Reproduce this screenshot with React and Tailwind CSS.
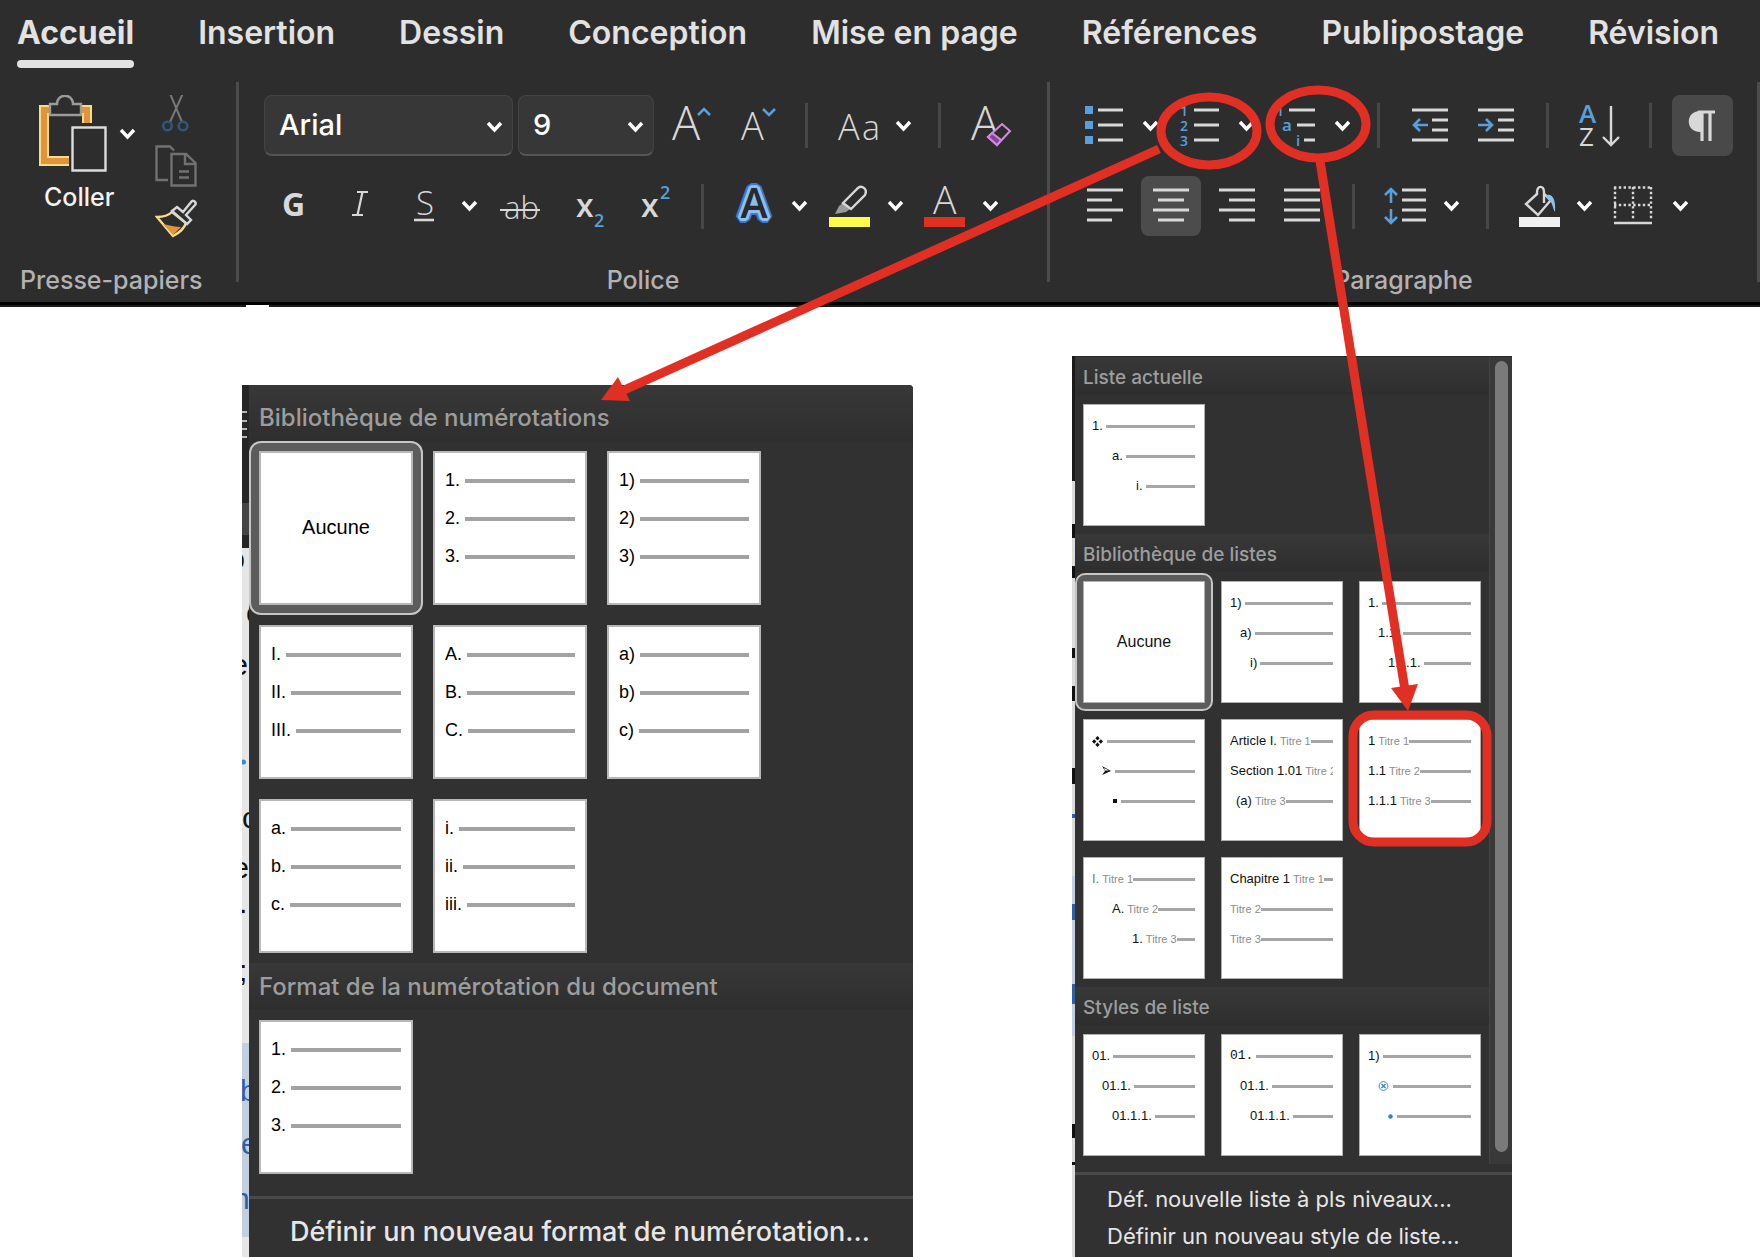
import { useState } from 'react';
import clsx from 'clsx';

const TABS = [
  'Accueil',
  'Insertion',
  'Dessin',
  'Conception',
  'Mise en page',
  'Références',
  'Publipostage',
  'Révision',
];

const NUMBERINGS = [
  { id: 'none', none: true },
  { id: 'decimal-dot', rows: ['1.', '2.', '3.'] },
  { id: 'decimal-paren', rows: ['1)', '2)', '3)'] },
  { id: 'upper-roman', rows: ['I.', 'II.', 'III.'] },
  { id: 'upper-alpha', rows: ['A.', 'B.', 'C.'] },
  { id: 'alpha-paren', rows: ['a)', 'b)', 'c)'] },
  { id: 'alpha-dot', rows: ['a.', 'b.', 'c.'] },
  { id: 'lower-roman', rows: ['i.', 'ii.', 'iii.'] },
];

const CURRENT_LIST = [
  {
    id: 'current',
    rows: [
      { label: '1.', indent: 'ml-0' },
      { label: 'a.', indent: 'ml-5' },
      { label: 'i.', indent: 'ml-11' },
    ],
  },
];

const LISTS = [
  { id: 'none', none: true },
  {
    id: 'mixed',
    rows: [
      { label: '1)', indent: 'ml-0' },
      { label: 'a)', indent: 'ml-[10px]' },
      { label: 'i)', indent: 'ml-5' },
    ],
  },
  {
    id: 'legal',
    rows: [
      { label: '1.', indent: 'ml-0' },
      { label: '1.1.', indent: 'ml-[10px]' },
      { label: '1.1.1.', indent: 'ml-5' },
    ],
  },
  {
    id: 'bullets',
    rows: [
      { mark: 'diamond', indent: 'ml-0' },
      { mark: 'arrow', indent: 'ml-[10px]' },
      { mark: 'square', indent: 'ml-5' },
    ],
  },
  {
    id: 'article',
    rows: [
      { label: 'Article I.', title: 'Titre 1', indent: 'ml-0' },
      { label: 'Section 1.01', title: 'Titre 2', indent: 'ml-0' },
      { label: '(a)', title: 'Titre 3', indent: 'ml-[6px]' },
    ],
  },
  {
    id: 'headings',
    rows: [
      { label: '1', title: 'Titre 1', indent: 'ml-0' },
      { label: '1.1', title: 'Titre 2', indent: 'ml-0' },
      { label: '1.1.1', title: 'Titre 3', indent: 'ml-0' },
    ],
  },
  {
    id: 'outline',
    rows: [
      { label: 'I.', title: 'Titre 1', indent: 'ml-0', faded: true },
      { label: 'A.', title: 'Titre 2', indent: 'ml-5' },
      { label: '1.', title: 'Titre 3', indent: 'ml-10' },
    ],
  },
  {
    id: 'chapter',
    rows: [
      { label: 'Chapitre 1', title: 'Titre 1', indent: 'ml-0' },
      { title: 'Titre 2', indent: 'ml-0' },
      { title: 'Titre 3', indent: 'ml-0' },
    ],
  },
];

const LIST_STYLES = [
  {
    id: 'style-1',
    rows: [
      { label: '01.', indent: 'ml-0' },
      { label: '01.1.', indent: 'ml-[10px]' },
      { label: '01.1.1.', indent: 'ml-5' },
    ],
  },
  {
    id: 'style-2',
    rows: [
      { label: '01.', indent: 'ml-0', mono: true },
      { label: '01.1.', indent: 'ml-[10px]' },
      { label: '01.1.1.', indent: 'ml-5' },
    ],
  },
  {
    id: 'style-3',
    rows: [
      { label: '1)', indent: 'ml-0' },
      { mark: 'target', indent: 'ml-[10px]' },
      { mark: 'dot', indent: 'ml-5' },
    ],
  },
];

/* ---------- Ribbon ---------- */

const Tool = ({ label, w, h = 60, className, children }) => (
  <button type="button" aria-label={label} title={label} className={clsx('shrink-0', className)}>
    <svg
      width={w}
      height={h}
      viewBox={`0 0 ${w} ${h}`}
      fill="none"
      stroke="#d8d8d8"
      strokeWidth="2"
      className="overflow-visible"
    >
      {children}
    </svg>
  </button>
);

const ChevronIcon = ({ className }) => (
  <svg width="17" height="12" viewBox="0 0 17 12" fill="none" className={className}>
    <path d="M2 2 L8.5 9 L15 2" stroke="#fff" strokeWidth="3.4" />
  </svg>
);

const Chevron = ({ label, className }) => (
  <button type="button" aria-label={label} className={clsx('shrink-0', className)}>
    <ChevronIcon />
  </button>
);

const Separator = ({ className }) => <div className={clsx('h-[45px] w-[3px] shrink-0 bg-[#474747]', className)} />;

const GroupDivider = () => <div className="h-[200px] w-[3px] shrink-0 bg-[#4c4c4c]" />;

const GroupLabel = ({ children }) => (
  <div className="mt-[29px] text-center text-[25px] font-medium leading-[30px] text-[#b2b2b2]">{children}</div>
);

const Select = ({ label, value, options, className }) => (
  <div className={clsx('relative shrink-0', className)}>
    <select
      aria-label={label}
      defaultValue={value}
      className="h-[61px] w-full appearance-none rounded-lg border border-b-2 border-[#434343] border-b-[#565656] bg-[#373737] pl-[14px] text-[29px] font-medium text-white"
    >
      {options.map((o) => (
        <option key={o}>{o}</option>
      ))}
    </select>
    <ChevronIcon className="pointer-events-none absolute right-[10px] top-[26px]" />
  </div>
);

const Lines = ({ rows }) =>
  rows.map(([x1, x2, y]) => <path key={`${x1}-${y}`} d={`M${x1} ${y} H${x2}`} strokeWidth="3" />);

const ClipboardGroup = () => (
  <section className="w-[236px] shrink-0 pt-[13px]">
    <div className="flex h-[141px]">
      <div className="ml-[38px] flex w-[100px] flex-col">
        <div className="flex">
          <button type="button" aria-label="Coller" className="shrink-0">
            <svg width="70" height="77" viewBox="0 0 70 77" fill="none">
              <path d="M34 66 H6 V15 H49 V28" stroke="#f8dc8c" strokeWidth="10" />
              <path d="M34 66 H6 V15 H49 V28" stroke="#e0953a" strokeWidth="6" />
              <path d="M12 8 H43 V20 H12 Z" fill="#2d2d2d" />
              <path d="M12 20 V9 H19 C19 -2 35 -2 35 9 H43 V20 Z" fill="#2d2d2d" stroke="#9b9b9b" strokeWidth="2.4" />
              <path d="M31 29 H70 V77 H31 Z" fill="#2d2d2d" />
              <path d="M34.500 32.500 H67.500 V75.500 H34.500 Z" stroke="#dcdcdc" strokeWidth="2.400" />
            </svg>
          </button>
          <Chevron label="Options de collage" className="ml-[11px]" />
        </div>
        <span className="ml-[6px] mt-[9px] text-[25px] font-medium leading-[32px] text-[#f2f2f2]">Coller</span>
      </div>
      <div className="ml-[17px] flex flex-col">
        <button type="button" aria-label="Couper" className="h-[44px]">
          <svg width="42" height="44" viewBox="0 0 42 44" fill="none">
            <path d="M14 -4 L27 27 M29 -4 L15 27" stroke="#787878" strokeWidth="2" />
            <circle cx="12.500" cy="31" r="4.300" stroke="#2f5577" strokeWidth="2.600" />
            <circle cx="28" cy="31" r="4.300" stroke="#2f5577" strokeWidth="2.600" />
          </svg>
        </button>
        <button type="button" aria-label="Copier" className="mt-[6px]">
          <svg width="42" height="42" viewBox="0 0 42 42" fill="none" stroke="#717171" strokeWidth="2.400">
            <path d="M13 35 H1.500 V1.500 H15 L19 5.500" />
            <path d="M16.500 9 H31 L40.500 18 V40.500 H16.500 Z M30 9 V19 H40" />
            <path d="M24 26.500 H34 M24 32.500 H34" />
          </svg>
        </button>
        <button type="button" aria-label="Reproduire la mise en forme" className="mt-[12px]">
          <svg width="42" height="40" viewBox="0 0 42 40" fill="none">
            <path d="M17 13 C13 17 8 18 2 18 L18 37 C24 34 29 30 31 24 Z" stroke="#f8dc8c" strokeWidth="2.400" />
            <path d="M8 25 C14 26 20 28 26 28 L18 36 Z" fill="#e0953a" />
            <path
              d="M17 12 L22 8 L28 13 L37 2 C39 1 42 4 40 6 L31 16 L36 21 L32 25 Z"
              fill="#2d2d2d"
              stroke="#d8d8d8"
              strokeWidth="2.400"
            />
          </svg>
        </button>
      </div>
    </div>
    <div className="ml-5 mt-[29px] text-[25px] font-medium leading-[30px] text-[#b2b2b2]">Presse-papiers</div>
  </section>
);

const FontGroup = () => (
  <section className="w-[808px] shrink-0 pt-[13px]">
    <div className="flex h-[61px] items-center">
      <Select label="Police" value="Arial" options={['Arial', 'Calibri', 'Times']} className="ml-[25px] w-[249px]" />
      <Select label="Taille de police" value="9" options={['8', '9', '10', '11', '12']} className="ml-[5px] w-[136px]" />
      <Tool label="Augmenter la taille" w={40} className="ml-[18px]">
        <text x="0" y="44" fontSize="47" className="fill-[#d8d8d8] stroke-none font-['Open_Sans'] font-light">A</text>
        <path d="M26 19 L32 13 L38 19" stroke="#5a9fdc" strokeWidth="2.600" />
      </Tool>
      <Tool label="Réduire la taille" w={36} className="ml-[29px]">
        <text x="0" y="44" fontSize="38" className="fill-[#d8d8d8] stroke-none font-['Open_Sans'] font-light">A</text>
        <path d="M22 13 L28 19 L34 13" stroke="#5a9fdc" strokeWidth="2.600" />
      </Tool>
      <Separator className="ml-[28px]" />
      <Tool label="Modifier la casse" w={42} className="ml-[30px]">
        <text x="0" y="44" fontSize="36" className="fill-[#d8d8d8] stroke-none font-['Open_Sans'] font-light">A</text>
        <text x="24" y="44" fontSize="34" className="fill-[#d8d8d8] stroke-none font-['Open_Sans'] font-light">a</text>
      </Tool>
      <Chevron label="Options de casse" className="ml-[15px]" />
      <Separator className="ml-[26px]" />
      <Tool label="Effacer la mise en forme" w={40} className="ml-[30px]">
        <text x="0" y="44" fontSize="47" className="fill-[#d8d8d8] stroke-none font-['Open_Sans'] font-light">A</text>
        <path d="M31 28 L39 35 L26 49 L17 41 Z" fill="#2d2d2d" stroke="#d08be0" />
        <path d="M21 37 L30 44 L26 49 L17 41 Z" fill="#8a3fa0" stroke="#d08be0" />
      </Tool>
    </div>
    <div className="mt-5 flex h-[60px] items-center">
      <Tool label="Gras" w={24} className="ml-[43px]">
        <text x="0" y="40" fontSize="32" className="fill-[#d8d8d8] stroke-none font-['Open_Sans'] font-bold">G</text>
      </Tool>
      <Tool label="Italique" w={20} className="ml-[44px]">
        <path d="M7 16 H18 M2 39 H13 M12.500 16 L7.500 39" strokeWidth="2.200" />
      </Tool>
      <Tool label="Souligné" w={20} className="ml-[44px]">
        <text x="2" y="39" fontSize="33" className="fill-[#d8d8d8] stroke-none font-['Open_Sans'] font-light">S</text>
        <path d="M0 44 H20" strokeWidth="2.600" />
      </Tool>
      <Chevron label="Styles de soulignement" className="ml-[27px]" />
      <Tool label="Barré" w={40} className="ml-[22px]">
        <text x="4" y="43" fontSize="31" className="fill-[#d8d8d8] stroke-none font-['Open_Sans'] font-light">ab</text>
        <path d="M0 34 H40" />
      </Tool>
      <Tool label="Indice" w={30} className="ml-[36px]">
        <text x="0" y="41" fontSize="32" className="fill-[#d8d8d8] stroke-none font-['Open_Sans'] font-semibold">x</text>
        <text x="18" y="51" fontSize="18" className="fill-[#5a9fdc] stroke-none font-['Open_Sans'] font-semibold">2</text>
      </Tool>
      <Tool label="Exposant" w={30} className="ml-[35px]">
        <text x="0" y="41" fontSize="32" className="fill-[#d8d8d8] stroke-none font-['Open_Sans'] font-semibold">x</text>
        <text x="19" y="23" fontSize="18" className="fill-[#5a9fdc] stroke-none font-['Open_Sans'] font-semibold">2</text>
      </Tool>
      <Separator className="ml-[30px]" />
      <Tool label="Effets de texte" w={40} className="ml-[30px]">
        <g className="font-['Open_Sans'] font-semibold" fontSize="41" textAnchor="middle" strokeLinejoin="bevel">
          <text x="20" y="42" stroke="#3c78cf" strokeWidth="10">A</text>
          <text x="20" y="42" stroke="#8fbfec" strokeWidth="6">A</text>
          <text x="20" y="42" stroke="none" fill="#262b33">A</text>
        </g>
      </Tool>
      <Chevron label="Options d’effets" className="ml-[17px]" />
      <Tool label="Surlignage" w={41} className="ml-[21px]">
        <path d="M0 41 H41 V51 H0 Z" fill="#fffb4b" stroke="none" />
        <path d="M6 38 L10 30 L14 27 L21 33 L17 36 Z" fill="#9a9a9a" stroke="none" />
        <path d="M14 27 L29 12 C33 9 39 13 36 19 L22 33 Z" strokeWidth="2.400" />
      </Tool>
      <Chevron label="Couleur de surlignage" className="ml-[17px]" />
      <Tool label="Couleur de police" w={41} className="ml-[20px]">
        <text x="9" y="38" fontSize="39" className="fill-[#d8d8d8] stroke-none font-['Open_Sans'] font-light">A</text>
        <path d="M0 41 H41 V51 H0 Z" fill="#e03020" stroke="none" />
      </Tool>
      <Chevron label="Choix de couleur" className="ml-[17px]" />
    </div>
    <GroupLabel>Police</GroupLabel>
  </section>
);

const ParagraphGroup = () => (
  <section className="min-w-0 flex-1 pt-[13px]">
    <div className="flex h-[61px] items-center">
      <Tool label="Puces" w={38} className="ml-[35px]">
        <path d="M0 10 H8 V18 H0 Z M0 25 H8 V33 H0 Z M0 40 H8 V48 H0 Z" fill="#5a9fdc" stroke="none" />
        <Lines rows={[[13, 38, 14], [13, 38, 29], [13, 38, 44]]} />
      </Tool>
      <Chevron label="Bibliothèque de puces" className="ml-[19px]" />
      <Tool label="Numérotation" w={39} className="ml-[21px]">
        <g className="fill-[#5a9fdc] stroke-none font-['Open_Sans'] font-semibold" fontSize="14">
          <text x="0" y="20">1</text>
          <text x="0" y="35">2</text>
          <text x="0" y="50">3</text>
        </g>
        <Lines rows={[[14, 39, 14], [14, 39, 29], [14, 39, 44]]} />
      </Tool>
      <Chevron label="Bibliothèque de numérotations" className="ml-[19px]" />
      <Tool label="Liste à plusieurs niveaux" w={36} className="ml-[24px]">
        <g className="fill-[#5a9fdc] stroke-none font-['Open_Sans'] font-semibold">
          <text x="-3" y="20" fontSize="14">1</text>
          <text x="3" y="35" fontSize="17">a</text>
          <text x="17" y="50" fontSize="15">i</text>
        </g>
        <Lines rows={[[10, 36, 14], [18, 36, 29], [25, 36, 44]]} />
      </Tool>
      <Chevron label="Bibliothèque de listes" className="ml-[19px]" />
      <Separator className="ml-[26px]" />
      <Tool label="Réduire le retrait" w={36} className="ml-[32px]">
        <Lines rows={[[0, 36, 14], [20, 36, 24], [20, 36, 34], [0, 36, 44]]} />
        <path d="M16 29 H2 M8 23 L2 29 L8 35" stroke="#5a9fdc" strokeWidth="2.600" />
      </Tool>
      <Tool label="Augmenter le retrait" w={36} className="ml-[30px]">
        <Lines rows={[[0, 36, 14], [20, 36, 24], [20, 36, 34], [0, 36, 44]]} />
        <path d="M0 29 H14 M8 23 L14 29 L8 35" stroke="#5a9fdc" strokeWidth="2.600" />
      </Tool>
      <Separator className="ml-[32px]" />
      <Tool label="Trier" w={41} className="ml-[30px]">
        <text x="0" y="27" fontSize="26" className="fill-[#5a9fdc] stroke-none font-['Open_Sans'] font-semibold">A</text>
        <text x="0" y="50" fontSize="26" className="fill-[#d8d8d8] stroke-none font-['Open_Sans']">Z</text>
        <path d="M32 10 V49 M24 41 L32 49 L40 41" strokeWidth="2.400" />
      </Tool>
      <Separator className="ml-[29px]" />
      <Tool label="Afficher les marques" w={61} h={61} className="ml-[20px] rounded-lg bg-[#494949]">
        <path d="M31 16 H28 C13 16 13 37 28 37 H31 Z" fill="#d8d8d8" stroke="none" />
        <path d="M26 17 H43 M30 17 V46 M38 17 V46" strokeWidth="3.200" />
      </Tool>
    </div>
    <div className="mt-5 flex h-[60px] items-center">
      <Tool label="Aligner à gauche" w={36} className="ml-[37px]">
        <Lines rows={[[0, 36, 14], [0, 25, 24], [0, 36, 34], [0, 25, 44]]} />
      </Tool>
      <Tool label="Centrer" w={60} className="ml-[18px] rounded-lg bg-[#4c4c4c]">
        <Lines rows={[[12, 48, 14], [17, 43, 24], [12, 48, 34], [17, 43, 44]]} />
      </Tool>
      <Tool label="Aligner à droite" w={36} className="ml-[18px]">
        <Lines rows={[[0, 36, 14], [10, 36, 24], [0, 36, 34], [10, 36, 44]]} />
      </Tool>
      <Tool label="Justifier" w={36} className="ml-[29px]">
        <Lines rows={[[0, 36, 14], [0, 36, 24], [0, 36, 34], [0, 36, 44]]} />
      </Tool>
      <Separator className="ml-[32px]" />
      <Tool label="Interligne" w={41} className="ml-[30px]">
        <path d="M6 27 V14 M0 19 L6 13 L12 19 M6 33 V46 M0 41 L6 47 L12 41" stroke="#5a9fdc" strokeWidth="2.600" />
        <Lines rows={[[17, 41, 14], [17, 41, 24], [17, 41, 34], [17, 41, 44]]} />
      </Tool>
      <Chevron label="Options d’interligne" className="ml-[17px]" />
      <Separator className="ml-[26px]" />
      <Tool label="Trame de fond" w={41} className="ml-[30px]">
        <path d="M18 18 L7 28 L19 39 L32 24 L25 18" strokeWidth="2.400" />
        <path d="M18 19 V17 C18 9 25 9 25 16 V27" strokeWidth="2.400" />
        <path d="M27 19 C34 17 37 24 36 36 C33 31 34 26 29 24 Z" fill="#8fbfec" stroke="none" />
        <path d="M0 41 H41 V51 H0 Z" fill="#f0f0f0" stroke="none" />
      </Tool>
      <Chevron label="Couleur de trame" className="ml-[16px]" />
      <Tool label="Bordures" w={38} className="ml-[21px]">
        <path d="M0 11.500 H38 M1 11 V44 M37 11 V44 M0 29 H38 M19 11 V44" strokeWidth="2.400" strokeDasharray="2.400 2.400" />
        <path d="M0 47 H38" strokeWidth="2.600" />
      </Tool>
      <Chevron label="Types de bordures" className="ml-[20px]" />
    </div>
    <GroupLabel>Paragraphe</GroupLabel>
  </section>
);

const Ribbon = () => {
  const [tab, setTab] = useState('Accueil');

  return (
    <header className="bg-[#2d2d2d]">
      <nav className="flex gap-x-16 overflow-hidden pl-[17px] pt-[13px]">
        {TABS.map((name) => (
          <button
            key={name}
            type="button"
            onClick={() => setTab(name)}
            className={clsx(
              'shrink-0 whitespace-nowrap text-[32px] leading-10 text-[#e2e2e2]',
              tab === name ? 'font-bold' : 'font-semibold'
            )}
          >
            {name}
            <span className={clsx('mt-[7px] block h-2 rounded-full', tab === name && 'bg-[#e2e2e2]')} />
          </button>
        ))}
      </nav>
      <div className="mt-[14px] flex h-[220px]">
        <ClipboardGroup />
        <GroupDivider />
        <FontGroup />
        <GroupDivider />
        <ParagraphGroup />
        <GroupDivider />
      </div>
      <div className="h-[3px] bg-black" />
      <div className="flex h-[2px] bg-[#1c1c1c]">
        <div className="ml-[246px] w-[23px] bg-white" />
      </div>
    </header>
  );
};

/* ---------- Galleries ---------- */

const MARKS = {
  diamond: (
    <svg width="11" height="11" viewBox="0 0 11 11" className="mr-1" fill="#111">
      <path d="M5.500 0 L7.700 2.200 L5.500 4.400 L3.300 2.200 Z M5.500 6.600 L7.700 8.800 L5.500 11 L3.300 8.800 Z M0 5.500 L2.200 3.300 L4.400 5.500 L2.200 7.700 Z M6.600 5.500 L8.800 3.300 L11 5.500 L8.800 7.700 Z" />
    </svg>
  ),
  arrow: (
    <svg width="9" height="10" viewBox="0 0 9 10" className="mr-1" fill="#111">
      <path d="M0 0 L9 5 L0 9 L3 5 Z M3 4.500 H7 L2 2 Z" fillRule="evenodd" />
    </svg>
  ),
  square: (
    <svg width="5" height="6" viewBox="0 0 5 6" className="mr-1" fill="#111">
      <path d="M1 1 H5 V5 H1 Z" />
    </svg>
  ),
  target: (
    <svg width="11" height="10" viewBox="0 0 11 10" className="mr-1" fill="none" stroke="#4a86d0">
      <circle cx="5.500" cy="5" r="4.400" />
      <path d="M3.500 3 L7.500 7 M7.500 3 L3.500 7" strokeWidth="1.600" />
    </svg>
  ),
  dot: (
    <svg width="5" height="5" viewBox="0 0 5 5" className="mr-1" fill="#3b7bd0">
      <circle cx="2.500" cy="2.500" r="2.300" />
    </svg>
  ),
};

const NumberTile = ({ item, active, onSelect }) => (
  <div className={clsx(active && 'rounded-[2px] outline-2 outline-offset-8 outline-[#c6c6c6] ring-8 ring-[#5c5c5c]')}>
    <button
      type="button"
      aria-pressed={active}
      onClick={onSelect}
      className="block size-[154px] border-2 border-[#b8b8b8] bg-white text-left text-black"
    >
      {item.none ? (
        <span className="block pb-0.5 text-center text-[20px]">Aucune</span>
      ) : (
        <span className="flex h-full flex-col px-[10px] pt-2 text-[18px]">
          {item.rows.map((label) => (
            <span key={label} className="flex h-[38px] items-center gap-[5px]">
              {label}
              <span className="mt-[2px] h-1 flex-1 bg-[#a2a2a2]" />
            </span>
          ))}
        </span>
      )}
    </button>
  </div>
);

const ListTile = ({ item, active, onSelect }) => (
  <div className={clsx(active && 'rounded-[2px] outline-2 outline-offset-6 outline-[#c6c6c6] ring-6 ring-[#5c5c5c]')}>
    <button
      type="button"
      aria-pressed={active}
      onClick={onSelect}
      className="block size-[122px] border border-[#b0b0b0] bg-white text-left text-[#111]"
    >
      {item.none ? (
        <span className="block text-center text-[16px]">Aucune</span>
      ) : (
        <span className="flex h-full flex-col pl-2 pr-[9px] pt-[6px] text-[13px]">
          {item.rows.map((row, i) => (
            <span key={i} className={clsx('flex h-[30px] items-center overflow-hidden whitespace-nowrap', row.indent)}>
              {row.mark && MARKS[row.mark]}
              {row.label && (
                <span
                  className={clsx(
                    'mr-[3px] shrink-0',
                    row.mono && "font-['Liberation_Mono']",
                    row.faded && 'text-[#777]'
                  )}
                >
                  {row.label}
                </span>
              )}
              {row.title && <span className="shrink-0 text-[11px] text-[#8c8c8c]">{row.title}</span>}
              <span className="h-[3px] flex-1 bg-[#a6a6a6]" />
            </span>
          ))}
        </span>
      )}
    </button>
  </div>
);

const NumberingMenu = () => {
  const [selected, setSelected] = useState('none');
  const heading = 'bg-linear-to-b from-[#383838] to-[#2e2e2e] pl-[10px] text-[24px] font-medium text-[#9d9d9d]';

  return (
    <div className="flex w-[671px] shrink-0">
      {/* page text left visible beside the menu */}
      <svg width="7" height="872" viewBox="0 0 7 872" className="shrink-0" aria-hidden="true">
        <path d="M0 0 H7 V163 H0 Z" fill="#262626" />
        <path d="M0 27 H5 M0 36 H5 M0 44 H5 M0 52 H5" stroke="#b5b5b5" strokeWidth="2" />
        <path d="M0 118 H7 V150 H0 Z" fill="#454545" />
        <path d="M0 163 H7 V872 H0 Z" fill="#e6e6e6" />
        <path d="M0 658 H7 V852 H0 Z" fill="#c3cfdf" />
        <g className="font-['Liberation_Sans']" fontSize="30" fill="#111">
          <text x="3" y="184" textAnchor="end">o</text>
          <text x="4" y="238">c</text>
          <text x="6" y="290" textAnchor="end">e</text>
          <text x="0" y="443">c</text>
          <text x="7" y="493" textAnchor="end">e</text>
          <text x="-3" y="528">.</text>
          <text x="-3" y="596">;</text>
        </g>
        <circle cx="1.500" cy="377" r="2.500" fill="#3f87d9" />
        <g className="font-['Liberation_Sans']" fontSize="30" fill="#2f609f">
          <text x="-2" y="716">b</text>
          <text x="-1" y="769">e</text>
          <text x="-9" y="824">n</text>
        </g>
      </svg>
      <div className="flex-1 overflow-hidden rounded-tr bg-[#313131]">
        <h2 className={clsx(heading, 'h-[57px] leading-[66px]')}>Bibliothèque de numérotations</h2>
        <div className="grid grid-cols-[repeat(3,154px)] gap-5 px-[10px] pb-[10px] pt-[9px] font-['Liberation_Sans',sans-serif]">
          {NUMBERINGS.map((item) => (
            <NumberTile
              key={item.id}
              item={item}
              active={selected === item.id}
              onSelect={() => setSelected(item.id)}
            />
          ))}
        </div>
        <h2 className={clsx(heading, 'h-[46px] leading-[48px]')}>Format de la numérotation du document</h2>
        <div className="px-[10px] pb-[22px] pt-[11px] font-['Liberation_Sans',sans-serif]">
          <NumberTile item={NUMBERINGS[1]} active={selected === 'doc'} onSelect={() => setSelected('doc')} />
        </div>
        <div className="h-[3px] bg-[#494949]" />
        <button
          type="button"
          className="h-[60px] w-full pl-[41px] pt-[6px] text-left text-[27px] font-medium text-[#e6e6e6]"
        >
          Définir un nouveau format de numérotation...
        </button>
      </div>
    </div>
  );
};

const ListSection = ({ title, items, selected, onSelect }) => (
  <>
    <h2 className="h-[38px] bg-linear-to-b from-[#383838] to-[#2e2e2e] pl-2 text-[19px] font-medium leading-[41px] text-[#9d9d9d]">
      {title}
    </h2>
    <div className="grid grid-cols-[repeat(3,122px)] gap-4 px-2 pb-2 pt-[9px] font-['Liberation_Sans',sans-serif]">
      {items.map((item) => (
        <ListTile key={item.id} item={item} active={selected === item.id} onSelect={() => onSelect(item.id)} />
      ))}
    </div>
  </>
);

const MultilevelMenu = () => {
  const [selected, setSelected] = useState('none');

  return (
    <div className="flex w-[440px] shrink-0">
      <svg width="3" height="901" viewBox="0 0 3 901" className="shrink-0" aria-hidden="true">
        <path d="M0 0 H3 V125 H0 Z" fill="#1a1a1a" />
        <path d="M0 125 H3 V901 H0 Z" fill="#dcdcdc" />
        <path d="M0 520 H3 V680 H0 Z" fill="#c3cfdf" />
        <path d="M0 168 H3 V182 H0 Z M0 210 H3 V222 H0 Z M0 292 H3 V302 H0 Z M0 330 H3 V345 H0 Z M0 412 H3 V428 H0 Z" fill="#111" />
        <path d="M0 458 H3 V462 H0 Z M0 548 H3 V564 H0 Z M0 628 H3 V648 H0 Z" fill="#2f609f" />
        <path d="M0 768 H3 V782 H0 Z M0 806 H3 V809 H0 Z" fill="#111" />
      </svg>
      <div className="flex-1 bg-[#313131]">
        <div className="flex border-t border-[#2a2a2a]">
          <div className="min-w-0 flex-1">
            <ListSection title="Liste actuelle" items={CURRENT_LIST} selected={selected} onSelect={setSelected} />
            <ListSection title="Bibliothèque de listes" items={LISTS} selected={selected} onSelect={setSelected} />
            <ListSection title="Styles de liste" items={LIST_STYLES} selected={selected} onSelect={setSelected} />
          </div>
          <div className="w-[23px] border-l border-[#444] bg-[#393939] pl-[5px] pt-1">
            <div className="h-[791px] w-[13px] rounded-full bg-[#7a7a7a]" />
          </div>
        </div>
        <div className="mt-2 h-[3px] bg-[#494949]" />
        <div className="flex flex-col items-start pb-2 pl-[32px] pt-[6px] text-[22px] leading-[37px] text-[#e6e6e6]">
          <button type="button">Déf. nouvelle liste à pls niveaux...</button>
          <button type="button">Définir un nouveau style de liste...</button>
        </div>
      </div>
    </div>
  );
};

/* Red circles and arrows laid over the page */
const Annotations = () => (
  <svg
    width="1760"
    height="1257"
    viewBox="0 0 1760 1257"
    fill="none"
    stroke="#e13023"
    strokeWidth="9"
    className="pointer-events-none absolute left-0 top-0"
    aria-hidden="true"
  >
    <ellipse cx="1209" cy="131" rx="48" ry="34" />
    <ellipse cx="1318" cy="124" rx="48" ry="34" />
    <path d="M1159 149 L622 391" />
    <path d="M601 400 L618 377 L630 401 Z" fill="#e13023" stroke="none" />
    <path d="M1320 161 L1405 690" />
    <path d="M1408 711 L1391 688 L1418 684 Z" fill="#e13023" stroke="none" />
    <rect x="1353" y="715" width="134" height="127" rx="21" />
  </svg>
);

export default function App() {
  return (
    <div className="relative min-h-screen overflow-hidden bg-white font-['Inter',sans-serif]">
      <Ribbon />
      <main className="flex items-start pl-[242px]">
        <div className="pt-[78px]">
          <NumberingMenu />
        </div>
        <div className="pl-[159px] pt-[49px]">
          <MultilevelMenu />
        </div>
      </main>
      <Annotations />
    </div>
  );
}
